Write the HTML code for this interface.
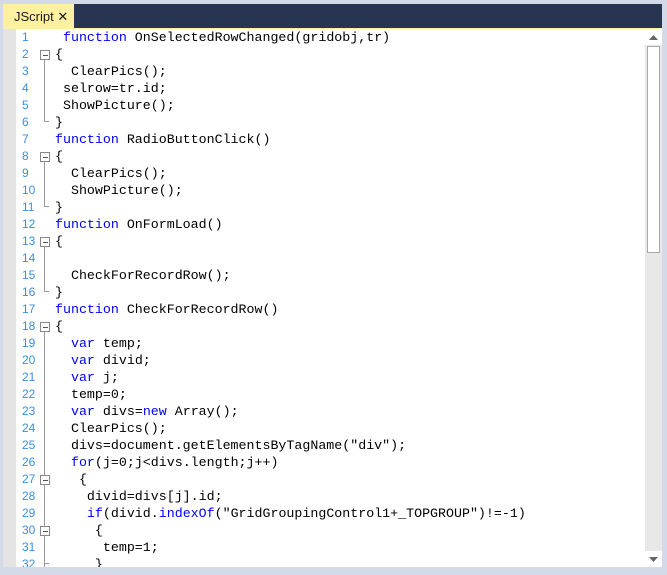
<!DOCTYPE html><html><head><style>
body{margin:0;width:667px;height:575px;background:#d5dae8;position:relative;overflow:hidden;font-family:"Liberation Mono",monospace}
.bar{position:absolute;left:3px;top:4px;width:659px;height:24px;background:#283550}
.tab{position:absolute;left:3px;top:4px;width:71px;height:25px;background:#fdf0a0;font:13px "Liberation Sans",sans-serif;color:#1a1a1a;line-height:26px;padding-left:11px;box-sizing:border-box}
.yl{position:absolute;left:3px;top:28px;width:659px;height:1px;background:#fdf0a0}
.ed{position:absolute;left:3px;top:29px;width:642px;height:538px;background:#fff;overflow:hidden}
.gut{position:absolute;left:0;top:0;width:13px;height:538px;background:#e4e4e4}
.ln{position:absolute;left:19px;width:20px;font:12px "Liberation Sans",sans-serif;color:#3b8fe0;line-height:17px}
.code{position:absolute;left:52px;top:0;font-size:13.3px;line-height:17px;white-space:pre;color:#000}
.k{color:#0000ff}
.fb{position:absolute;left:37px;width:8px;height:8px;border:1px solid #888;background:#fff}
.fb:after{content:"";position:absolute;left:2px;top:4px;width:5px;height:1px;background:#555}
.vl{position:absolute;left:41px;width:1px;background:#999}
.el{position:absolute;left:41px;width:5px;height:1px;background:#999}
.sb{position:absolute;left:645px;top:29px;width:17px;height:538px;background:#e8e8e8}
.up,.dn{position:absolute;left:0;width:17px;height:16px;background:#fff}
.thumb{position:absolute;left:2px;top:17px;width:11px;height:205px;border:1px solid #aaa;background:#fff}
</style></head><body>
<div class="bar"></div><div class="tab">JScript ✕</div><div class="yl"></div>
<div class="ed"><div class="gut"></div>
<div class="ln" style="top:0">1<br>2<br>3<br>4<br>5<br>6<br>7<br>8<br>9<br>10<br>11<br>12<br>13<br>14<br>15<br>16<br>17<br>18<br>19<br>20<br>21<br>22<br>23<br>24<br>25<br>26<br>27<br>28<br>29<br>30<br>31<br>32</div>
<div class="fb" style="top:21px"></div><div class="vl" style="top:31px;height:61px"></div><div class="el" style="top:92px"></div>
<div class="fb" style="top:123px"></div><div class="vl" style="top:133px;height:44px"></div><div class="el" style="top:177px"></div>
<div class="fb" style="top:208px"></div><div class="vl" style="top:218px;height:44px"></div><div class="el" style="top:262px"></div>
<div class="fb" style="top:293px"></div><div class="vl" style="top:303px;height:240px"></div>
<div class="fb" style="top:446px"></div><div class="fb" style="top:497px"></div><div class="el" style="top:534px"></div>
<div class="code"> <span class="k">function</span> OnSelectedRowChanged(gridobj,tr)
{
  ClearPics();
 selrow=tr.id;
 ShowPicture();
}
<span class="k">function</span> RadioButtonClick()
{
  ClearPics();
  ShowPicture();
}
<span class="k">function</span> OnFormLoad()
{

  CheckForRecordRow();
}
<span class="k">function</span> CheckForRecordRow()
{
  <span class="k">var</span> temp;
  <span class="k">var</span> divid;
  <span class="k">var</span> j;
  temp=0;
  <span class="k">var</span> divs=<span class="k">new</span> Array();
  ClearPics();
  divs=document.getElementsByTagName("div");
  <span class="k">for</span>(j=0;j&lt;divs.length;j++)
   {
    divid=divs[j].id;
    <span class="k">if</span>(divid.<span class="k">indexOf</span>("GridGroupingControl1+_TOPGROUP")!=-1)
     {
      temp=1;
     }</div></div>
<div class="sb"><div class="up" style="top:0"><svg width="17" height="16"><path d="M4 11h9l-4.5-5z" fill="#666"/></svg></div><div class="thumb"></div><div class="dn" style="top:522px"><svg width="17" height="16"><path d="M4 6h9l-4.5 5z" fill="#666"/></svg></div></div>
</body></html>
